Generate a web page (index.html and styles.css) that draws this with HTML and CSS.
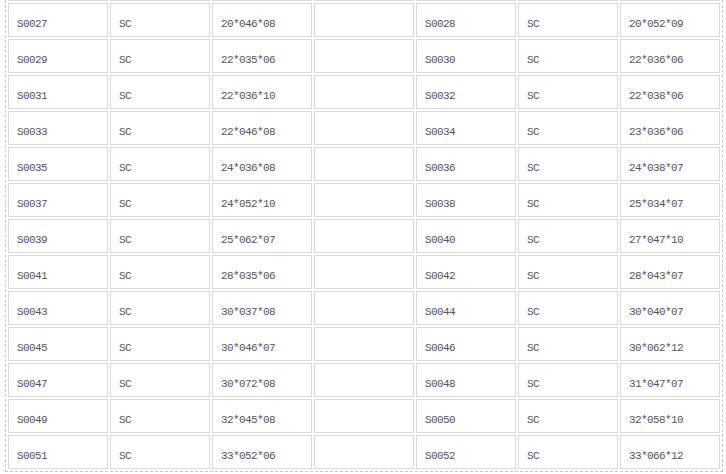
FILE: index.html
```html
<!DOCTYPE html>
<html>
<head>
<meta charset="utf-8">
<link rel="stylesheet" href="styles.css">
</head>
<body>
<div class="wrap">
<table class="grid">
<tr class="prev"><td></td><td></td><td></td><td></td><td></td><td></td><td></td></tr>
<tr><td>S0027</td><td>SC</td><td>20*046*08</td><td></td><td>S0028</td><td>SC</td><td>20*052*09</td></tr>
<tr><td>S0029</td><td>SC</td><td>22*035*06</td><td></td><td>S0030</td><td>SC</td><td>22*036*06</td></tr>
<tr><td>S0031</td><td>SC</td><td>22*036*10</td><td></td><td>S0032</td><td>SC</td><td>22*038*06</td></tr>
<tr><td>S0033</td><td>SC</td><td>22*046*08</td><td></td><td>S0034</td><td>SC</td><td>23*036*06</td></tr>
<tr><td>S0035</td><td>SC</td><td>24*036*08</td><td></td><td>S0036</td><td>SC</td><td>24*038*07</td></tr>
<tr><td>S0037</td><td>SC</td><td>24*052*10</td><td></td><td>S0038</td><td>SC</td><td>25*034*07</td></tr>
<tr><td>S0039</td><td>SC</td><td>25*062*07</td><td></td><td>S0040</td><td>SC</td><td>27*047*10</td></tr>
<tr><td>S0041</td><td>SC</td><td>28*035*06</td><td></td><td>S0042</td><td>SC</td><td>28*043*07</td></tr>
<tr><td>S0043</td><td>SC</td><td>30*037*08</td><td></td><td>S0044</td><td>SC</td><td>30*040*07</td></tr>
<tr><td>S0045</td><td>SC</td><td>30*046*07</td><td></td><td>S0046</td><td>SC</td><td>30*062*12</td></tr>
<tr><td>S0047</td><td>SC</td><td>30*072*08</td><td></td><td>S0048</td><td>SC</td><td>31*047*07</td></tr>
<tr><td>S0049</td><td>SC</td><td>32*045*08</td><td></td><td>S0050</td><td>SC</td><td>32*058*10</td></tr>
<tr><td>S0051</td><td>SC</td><td>33*052*06</td><td></td><td>S0052</td><td>SC</td><td>33*066*12</td></tr>
</table>
</div>
</body>
</html>
```
FILE: styles.css
```css
html, body {
  background: #ffffff;
}
body {
  margin: 0 0 0 5px;
  font-family: "Liberation Mono", "DejaVu Sans Mono", monospace;
}
.wrap {
  width: 716px;
  margin-top: -35px;
  border-left: 1px dashed #c8c8c8;
  border-right: 1px dashed #c8c8c8;
  border-bottom: 1px dashed #c8c8c8;
}
.grid {
  border-collapse: separate;
  border-spacing: 2px;
  table-layout: fixed;
  width: 716px;
}
.grid td {
  box-sizing: border-box;
  width: 100px;
  border: 1px solid #dadada;
  padding: 13px 8px 5px 8px;
  font-size: 11px;
  letter-spacing: -0.6px;
  line-height: 14px;
  height: 34px;
  color: #555555;
  white-space: nowrap;
  overflow: hidden;
  vertical-align: top;
}
```
